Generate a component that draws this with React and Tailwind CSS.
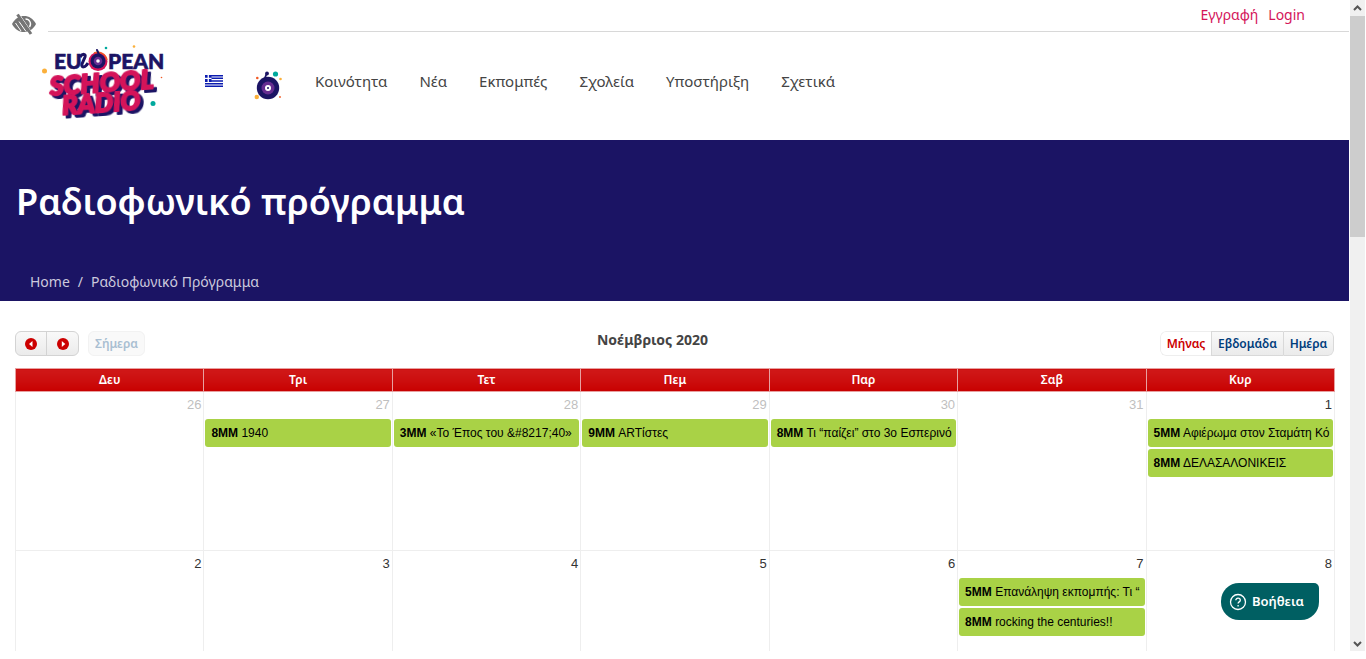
import React from 'react';

const navItems = ['Κοινότητα', 'Νέα', 'Εκπομπές', 'Σχολεία', 'Υποστήριξη', 'Σχετικά'];
const dayNames = ['Δευ', 'Τρι', 'Τετ', 'Πεμ', 'Παρ', 'Σαβ', 'Κυρ'];

const weeks = [
  [
    { day: 26, other: true, events: [] },
    { day: 27, other: true, events: [['8ΜΜ', '1940']] },
    { day: 28, other: true, events: [['3ΜΜ', '«Το Έπος του &#8217;40»']] },
    { day: 29, other: true, events: [['9ΜΜ', 'ARTίστες']] },
    { day: 30, other: true, events: [['8ΜΜ', 'Τι “παίζει” στο 3ο Εσπερινό']] },
    { day: 31, other: true, events: [] },
    { day: 1, events: [['5ΜΜ', 'Αφιέρωμα στον Σταμάτη Κό'], ['8ΜΜ', 'ΔΕΛΑΣΑΛΟΝΙΚΕΙΣ']] },
  ],
  [
    { day: 2, events: [] },
    { day: 3, events: [] },
    { day: 4, events: [] },
    { day: 5, events: [] },
    { day: 6, events: [] },
    { day: 7, events: [['5ΜΜ', 'Επανάληψη εκπομπής: Τι “'], ['8ΜΜ', 'rocking the centuries!!']] },
    { day: 8, events: [] },
  ],
];

function LowVisionIcon() {
  return (
    <svg viewBox="0 0 24 22" className="h-[22px] w-6" fill="none" aria-hidden="true">
      <path d="M0 11C3 5.500 7 3 12 3s9 2.500 12 8c-3 5.500-7 8-12 8S3 16.500 0 11Z" fill="#757575" />
      <path d="M13.500 6a5 5 0 0 1 4 8" stroke="#fff" strokeWidth="1.300" />
      <path d="M3.500 10l5.500 8M7 8.500l7 10M8.500 3l11.500 17" stroke="#fff" strokeWidth="1" />
      <path d="M5.500 1.500L19 21" stroke="#757575" strokeWidth="3" />
    </svg>
  );
}

function Logo() {
  return (
    <svg viewBox="0 0 126 76" className="h-[76px] w-[126px] overflow-visible" role="img" aria-label="European School Radio">
      <g fontFamily="Lato, sans-serif" fontWeight="900" fontSize="21" fill="#1b1464" stroke="#1b1464" strokeWidth="0.600">
        <text x="12" y="26">EU</text>
        <text x="66" y="26">PEAN</text>
      </g>
      <path d="M38 14c3-4 6-3 5 0l-3 7c-1 4 3 4 6-1" stroke="#1b1464" strokeWidth="3" fill="none" />
      <circle cx="56" cy="18.500" r="9.500" fill="#d4145a" />
      <path d="M52 10a9.500 9.500 0 0 1 13 7" stroke="#f15a24" strokeWidth="1.500" fill="none" />
      <circle cx="56" cy="18" r="7.500" fill="#1b1464" />
      <circle cx="56" cy="18" r="4.300" fill="#662d91" />
      <circle cx="56" cy="18" r="1.800" fill="#fff" />
      <path d="M55 7l2 4.500" stroke="#1b1464" strokeWidth="2" strokeLinecap="round" />
      <g
        className="drop-shadow-[3px_3px_0_#1b1464]"
        fontFamily="Lato, sans-serif"
        fontWeight="900"
        fontStyle="italic"
        fill="#d4145a"
        stroke="#d4145a"
        strokeLinejoin="round"
        strokeWidth="2"
        transform="rotate(-4 60 48)"
      >
        <text x="8" y="49" fontSize="27">SCHOOL</text>
        <text x="19" y="69" fontSize="26">RADIO</text>
      </g>
      <circle cx="2.500" cy="28" r="2.500" fill="#fbb03b" />
      <circle cx="64" cy="5" r="1.300" fill="#00a99d" />
      <circle cx="92" cy="3.500" r="1.300" fill="#fbb03b" />
      <circle cx="119.500" cy="34.500" r="0.800" fill="#f15a24" />
      <circle cx="111" cy="60.500" r="2.500" fill="#00a99d" />
    </svg>
  );
}

function GreekFlag() {
  return (
    <svg viewBox="0 0 18 12" className="h-3 w-[18px]" role="img" aria-label="Ελληνικά">
      <path fill="#fff" d="M0 0h18v12H0z" />
      <path d="M0 .7h18M0 3.300h18M0 6h18M0 8.700h18M0 11.300h18" stroke="#0c1cb0" strokeWidth="1.400" />
      <path fill="#0c1cb0" d="M0 0h6.500v7H0z" />
      <path d="M3.250 0v7M0 3.400h6.500" stroke="#fff" strokeWidth="1.300" />
    </svg>
  );
}

function DiscIcon() {
  return (
    <svg viewBox="0 0 28 30" className="h-[30px] w-7" aria-hidden="true">
      <circle cx="14" cy="18" r="11.200" fill="#1b1464" />
      <circle cx="14" cy="18" r="6.500" fill="#662d91" />
      <circle cx="14" cy="18" r="3" fill="#fff" />
      <circle cx="14" cy="18" r="1" fill="#1b1464" />
      <path d="M10.500 9l2-5" stroke="#1b1464" strokeWidth="1.800" />
      <circle cx="13" cy="3.500" r="1.900" fill="#1b1464" />
      <circle cx="21.500" cy="4" r="2.600" fill="#00a99d" />
      <circle cx="26.500" cy="9" r="1.300" fill="#fbb03b" />
      <circle cx="3.300" cy="8" r="1.300" fill="#f15a24" />
      <circle cx="2.800" cy="27" r="2.200" fill="#fbb03b" />
      <circle cx="26" cy="27" r="0.900" fill="#f15a24" />
    </svg>
  );
}

function ArrowIcon({ left }) {
  return (
    <svg viewBox="0 0 12 12" className="h-3 w-3" aria-hidden="true">
      <circle cx="6" cy="6" r="6" fill="#c00" />
      <path d={left ? 'M7.500 3v6L4 6z' : 'M4.800 3v6L8.300 6z'} fill="#fff" />
    </svg>
  );
}

function Scrollbar() {
  return (
    <div className="mx-px flex w-[15px] shrink-0 flex-col items-center bg-[#f0f0f0]" aria-hidden="true">
      <svg viewBox="0 0 15 16" className="h-4 w-full shrink-0" fill="none" stroke="#555" strokeWidth="2">
        <path d="M4 10l3.500-3.500L11 10" />
      </svg>
      <div className="h-[34%] w-full bg-[#cdcdcd]" />
      <svg viewBox="0 0 15 16" className="mt-auto h-4 w-full shrink-0" fill="none" stroke="#555" strokeWidth="2">
        <path d="M4 7l3.500 3.500L11 7" />
      </svg>
    </div>
  );
}

function Calendar() {
  return (
    <section className="pt-[30px] pr-3.5 pl-[15px]">
      <div className="mb-3 flex h-[25px] items-stretch pr-px text-[12px] font-semibold">
        <div className="flex rounded-md border border-[#d3d3d3] bg-linear-to-b from-[#f9f9f9] to-[#ebebeb]">
          <button type="button" aria-label="Προηγούμενος" className="flex w-[31px] items-center justify-center border-r border-[#d3d3d3]">
            <ArrowIcon left />
          </button>
          <button type="button" aria-label="Επόμενος" className="flex w-[31px] items-center justify-center">
            <ArrowIcon />
          </button>
        </div>
        <button type="button" disabled className="ml-[9px] w-[57px] rounded-md border border-[#f2f2f2] bg-[#f9f9f9] text-[#a9bfd2]">
          Σήμερα
        </button>
        <h2 className="flex-1 text-center text-[14px] leading-[18px] font-bold text-[#444]">Νοέμβριος 2020</h2>
        <div className="flex overflow-hidden rounded-md text-[#003d7c]">
          <button type="button" className="w-[51px] rounded-l-md border border-r-0 border-[#eee] bg-white text-[#c00]">Μήνας</button>
          <button type="button" className="w-[72px] border-y border-l border-[#d9d9d9] bg-linear-to-b from-[#f9f9f9] to-[#ebebeb]">Εβδομάδα</button>
          <button type="button" className="w-[51px] rounded-r-md border border-[#d9d9d9] bg-linear-to-b from-[#f9f9f9] to-[#ebebeb]">Ημέρα</button>
        </div>
      </div>
      <table className="w-full table-fixed border-collapse">
        <thead>
          <tr>
            {dayNames.map((name) => (
              <th key={name} scope="col" className="h-[23px] border border-[#e8a0a0] bg-linear-to-b from-[#d01818] to-[#c80000] p-0 text-[12px] leading-[18px] font-semibold text-white">
                {name}
              </th>
            ))}
          </tr>
        </thead>
        <tbody className="font-['Liberation_Sans',Arial,sans-serif] text-[12px]">
          {weeks.map((week, i) => (
            <tr key={i}>
              {week.map((cell) => (
                <td key={cell.day} className="h-[159px] border border-[#eee] p-0 align-top">
                  <div className={cell.other ? 'px-0.5 pt-1 text-right text-[13px] leading-[18px] text-[#bfbfbf]' : 'px-0.5 pt-1 text-right text-[13px] leading-[18px] text-[#333]'}>
                    {cell.day}
                  </div>
                  <div className="flex flex-col gap-0.5 px-px pt-[5px]">
                    {cell.events.map(([time, title]) => (
                      <a key={title} href="#event" className="block h-7 overflow-hidden rounded-[3px] bg-[#a9d246] px-1.5 leading-7 whitespace-nowrap text-black">
                        <b>{time}</b> {title}
                      </a>
                    ))}
                  </div>
                </td>
              ))}
            </tr>
          ))}
        </tbody>
      </table>
    </section>
  );
}

export default function App() {
  return (
    <div className="flex h-screen overflow-hidden bg-white pb-2 font-['Noto_Sans','Open_Sans',sans-serif] text-[#444]">
      <div className="min-w-0 flex-1 overflow-hidden">
        <div className="flex h-8">
          <button type="button" aria-label="Προσβασιμότητα" className="mt-3 ml-3 h-6 w-6 shrink-0">
            <LowVisionIcon />
          </button>
          <div className="ml-3 flex flex-1 justify-end gap-2.5 border-b border-[#d8d8d8] pr-11 text-[14px] leading-[30px] text-[#d4145a]">
            <a href="#register">Εγγραφή</a>
            <a href="#login">Login</a>
          </div>
        </div>
        <header className="flex h-[108px] items-center pb-2.5 pl-[42px]">
          <a href="#home" className="shrink-0">
            <Logo />
          </a>
          <nav className="ml-[37px] flex items-center text-[15px]">
            <a href="#greek"><GreekFlag /></a>
            <a href="#radio" className="mt-2 mr-[33px] ml-[31px]"><DiscIcon /></a>
            <div className="flex gap-8">
              {navItems.map((item) => (
                <a key={item} href="#menu">{item}</a>
              ))}
            </div>
          </nav>
        </header>
        <div className="h-[161px] bg-[#1b1464] px-4 pt-[35px]">
          <h1 className="text-[36px] leading-[54px] font-semibold text-white">Ραδιοφωνικό πρόγραμμα</h1>
          <nav className="mt-[43px] flex gap-2 px-3.5 text-[14px] leading-5 text-[#ccc9dd]" aria-label="Breadcrumb">
            <a href="#home">Home</a>
            <span>/</span>
            <span>Ραδιοφωνικό Πρόγραμμα</span>
          </nav>
        </div>
        <Calendar />
      </div>
      <Scrollbar />
      <button type="button" className="fixed right-[47px] bottom-[39px] flex h-[37px] w-[98px] items-center gap-[5px] rounded-[18px] rounded-tr-[5px] bg-[#005f62] pl-2 text-[13px] font-semibold text-white">
        <svg viewBox="0 0 18 18" className="h-[18px] w-[18px]" fill="none" stroke="#fff" strokeWidth="1.300" aria-hidden="true">
          <circle cx="9" cy="9" r="7.500" />
          <path d="M6.800 7.300c0-3 4.500-2.800 4.500-.1 0 1.700-2.200 1.600-2.200 3.300M9.100 12v1.500" />
        </svg>
        Βοήθεια
      </button>
    </div>
  );
}
